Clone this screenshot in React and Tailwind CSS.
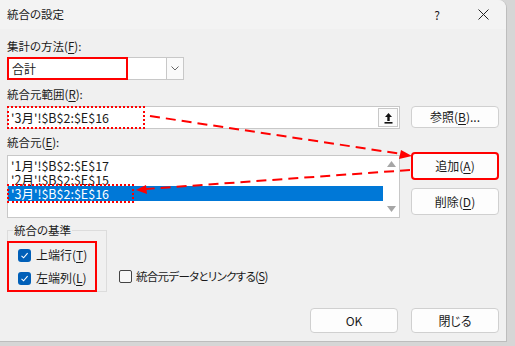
import React from 'react';

const font = { fontFamily: '"Noto Sans CJK JP", "Noto Sans", sans-serif' };

const Btn = ({ children, className = '' }) => (
  <div
    className={`h-[22px] w-[88px] flex items-center justify-center bg-[#fdfdfd] border border-[#d0d0d0] rounded-[4px] text-[12px] leading-[14px] text-[#1a1a1a] ${className}`}
  >
    {children}
  </div>
);

const Check = ({ checked }) =>
  checked ? (
    <div className="w-[13px] h-[13px] rounded-[3px] bg-[#005fb8] flex items-center justify-center">
      <svg width="9" height="9" viewBox="0 0 9 9">
        <path d="M1.5 4.8 L3.6 6.8 L7.6 2.2" fill="none" stroke="#fff" strokeWidth="1.1" />
      </svg>
    </div>
  ) : (
    <div className="w-[13px] h-[13px] rounded-[2px] border border-[#444] bg-[#f7f7f7]" />
  );

const U = ({ children }) => <span className="underline underline-offset-2">{children}</span>;

export default function App() {
  return (
    <div className="relative w-[515px] h-[346px] bg-[#d6d6d6] overflow-hidden [font-feature-settings:'palt']" style={font}>
      <div className="w-[507px] h-[342px] bg-[#f0f0f0] rounded-tr-[8px] border-r border-b border-[#bdbdbd] text-[#1a1a1a]">
        {/* title bar */}
        <div className="h-[29px] flex items-center bg-[#f3f3f3] rounded-tr-[8px]">
          <span className="pl-[7px] text-[11.5px]">統合の設定</span>
          <div className="ml-auto flex h-full">
            <div className="w-[46px] flex items-center justify-center text-[12px]">?</div>
            <div className="w-[46px] flex items-center justify-center">
              <svg width="11" height="11" viewBox="0 0 11 11">
                <path d="M0.5 0.5 L10.5 10.5 M10.5 0.5 L0.5 10.5" stroke="#222" strokeWidth="1" />
              </svg>
            </div>
          </div>
        </div>

        <div className="px-[7px] text-[11.5px] leading-[16px]">
          <div className="h-[16px] mt-[9px] flex items-center">
            集計の方法(<U>F</U>):
          </div>
          {/* combo */}
          <div className="mt-[3px] w-[177px] h-[23px] flex bg-white border border-[#c8c8c8] text-[12px]">
            <div className="w-[121px] -ml-px -my-px border-2 border-[#f00] flex items-center pl-[3px]">合計</div>
            <div className="ml-auto w-[17px] border-l border-[#c8c8c8] bg-[#fafafa] flex items-center justify-center">
              <svg width="8" height="5" viewBox="0 0 8 5">
                <path d="M0.5 0.5 L4 4 L7.5 0.5" fill="none" stroke="#666" strokeWidth="1" />
              </svg>
            </div>
          </div>

          <div className="h-[16px] mt-[6px] flex items-center">
            統合元範囲(<U>R</U>):
          </div>
          {/* range input row */}
          <div className="mt-[4px] flex items-start">
            <div className="w-[393px] h-[23px] flex bg-white border border-[#c8c8c8] text-[12.5px]">
              <div className="w-[138px] -ml-px -my-px border-2 border-dotted border-[#f00] flex items-center pl-[2px]">
                '3月'!$B$2:$E$16
              </div>
              <div className="ml-auto w-[20px] my-px mr-px border border-[#c8c8c8] bg-[#fbfbfb] flex items-center justify-center">
                <svg width="9" height="12" viewBox="0 0 9 12">
                  <path d="M4.5 1 L1 5 H3.3 V9 H5.7 V5 H8 Z" fill="#111" />
                  <rect x="0.5" y="10" width="8" height="1.6" fill="#111" />
                </svg>
              </div>
            </div>
            <Btn className="ml-auto">
              参照(<U>B</U>)...
            </Btn>
          </div>

          <div className="h-[16px] mt-[5px] flex items-center">
            統合元(<U>E</U>):
          </div>
          {/* sources list + buttons */}
          <div className="mt-[2px] flex items-start">
            <div className="mt-[3px] w-[393px] h-[63px] flex bg-white border border-[#c8c8c8] text-[12.5px] leading-[13px]">
              <div className="flex-1 pt-[2px] flex flex-col">
                <div className="h-[14px] flex items-center pl-[3px]">'1月'!$B$2:$E$17</div>
                <div className="h-[14px] flex items-center pl-[3px]">'2月'!$B$2:$E$15</div>
                <div className="relative h-[15px] bg-[#0078d7] text-white flex items-center pl-[3px]">
                  '3月'!$B$2:$E$16
                  <div className="absolute -left-px -top-[2px] w-[127px] h-[19px] border-2 border-dotted border-[#f00]" />
                </div>
              </div>
              <div className="w-[16px] flex flex-col items-center justify-between py-[5px]">
                <svg width="9" height="6" viewBox="0 0 9 6">
                  <path d="M0 6 L4.5 0 L9 6 Z" fill="#a6a6a6" />
                </svg>
                <svg width="9" height="6" viewBox="0 0 9 6">
                  <path d="M0 0 L4.5 6 L9 0 Z" fill="#a6a6a6" />
                </svg>
              </div>
            </div>
            <div className="ml-auto w-[88px] flex flex-col">
              <Btn className="h-[28px] border-2 border-[#f00]">
                追加(<U>A</U>)
              </Btn>
              <Btn className="mt-[8px] h-[27px]">
                削除(<U>D</U>)
              </Btn>
            </div>
          </div>

          {/* options */}
          <div className="mt-[12px] flex items-end">
            <div className="relative w-[100px] h-[62px] border border-[#dcdcdc]">
              <span className="absolute left-[5px] -top-[9px] px-px bg-[#f0f0f0] leading-[16px]">統合の基準</span>
              <div className="absolute -left-px top-[10px] w-[90px] h-[51px] border-2 border-[#f00] flex flex-col pl-[9px] pt-[5px] gap-[9px]">
                <div className="flex items-center gap-[5px] h-[14px]">
                  <Check checked />
                  <span className="text-[12px]">
                    上端行(<U>T</U>)
                  </span>
                </div>
                <div className="flex items-center gap-[5px] h-[14px]">
                  <Check checked />
                  <span className="text-[12px]">
                    左端列(<U>L</U>)
                  </span>
                </div>
              </div>
            </div>
            <div className="ml-[12px] mb-[8px] flex items-center gap-[4px]">
              <Check />
              <span className="text-[11.5px] tracking-[-0.7px]">
                統合元データとリンクする(<U>S</U>)
              </span>
            </div>
          </div>

          <div className="mt-[16px] flex justify-end gap-[13px]">
            <Btn className="h-[25px] border-[#0067c0]">OK</Btn>
            <Btn className="h-[25px]">閉じる</Btn>
          </div>
        </div>
      </div>

      {/* annotation arrows */}
      <svg className="absolute inset-0 pointer-events-none" width="515" height="346">
        <line x1="150" y1="116" x2="402" y2="154" stroke="#f00" strokeWidth="2" strokeDasharray="10 6" />
        <path d="M412 156 L401 150 L399 159 Z" fill="#f00" />
        <line x1="410" y1="170" x2="146" y2="189" stroke="#f00" strokeWidth="2" strokeDasharray="10 6" />
        <path d="M136 190 L146 185 L147 194 Z" fill="#f00" />
      </svg>
    </div>
  );
}
